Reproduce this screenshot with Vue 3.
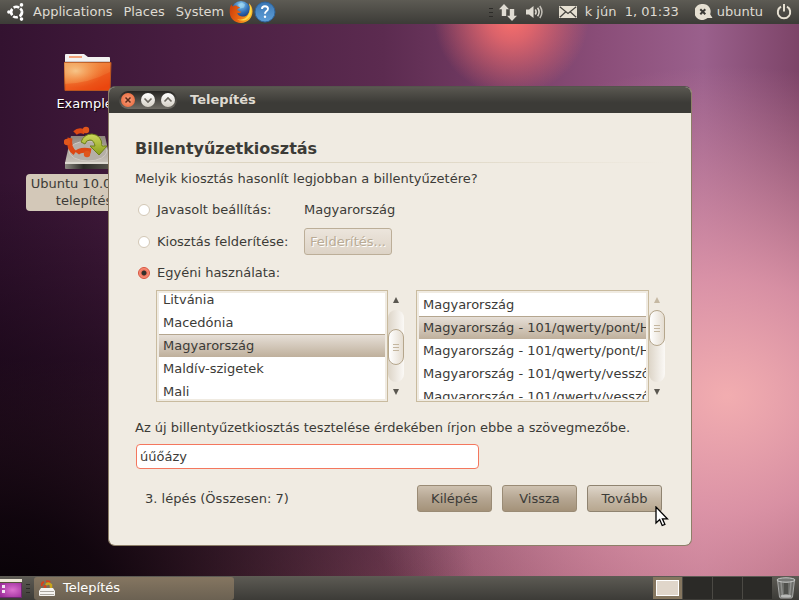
<template>
  <div class="desktop">
    <!-- Top panel -->
    <header class="panel panel-top">
      <nav class="menus">
        <svg class="logo" width="18" height="18" viewBox="0 0 18 18">
          <g fill="none" stroke="#fff" stroke-width="2.600">
            <path d="M6.600 4.600A5.200 5.200 0 0 1 12.200 4.800" />
            <path d="M15 8.200A5.200 5.200 0 0 1 12.600 13.300" />
            <path d="M10.800 14.100A5.200 5.200 0 0 1 6.200 13.200" />
            <path d="M5.200 12.200A5.200 5.200 0 0 1 5.200 5.900" />
            <path d="M13.200 5.500A5.200 5.200 0 0 1 15 8.200" />
          </g>
          <circle cx="1.9" cy="9" r="1.800" fill="#fff" />
          <circle cx="14.500" cy="1.900" r="1.800" fill="#fff" />
          <circle cx="14.500" cy="16.100" r="1.800" fill="#fff" />
        </svg>
        <button v-for="menu in menus" :key="menu" class="menu-btn">{{ menu }}</button>
      </nav>
      <button class="launcher" aria-label="Firefox">
        <svg width="24" height="24" viewBox="0 0 24 24">
          <defs>
            <radialGradient id="ffGlobe" cx=".5" cy=".2" r=".8">
              <stop offset="0" stop-color="#8fd0f2" />
              <stop offset=".5" stop-color="#2f6fb8" />
              <stop offset="1" stop-color="#14245e" />
            </radialGradient>
            <linearGradient id="ffTail" x1="0" y1="0" x2="1" y2=".3">
              <stop offset="0" stop-color="#c93a0a" />
              <stop offset=".6" stop-color="#ec6a12" />
              <stop offset="1" stop-color="#f9b428" />
            </linearGradient>
          </defs>
          <circle cx="12" cy="10.500" r="9.500" fill="url(#ffGlobe)" />
          <path d="M9 4.500l4-2 3 2-1 3-4 1z" fill="#a6dcf4" opacity=".6" />
          <path
            d="M2.400 4.200Q1 6 .7 10C0 18 5.500 23 12 23s11.500-5 11.500-11.500c0-4-1.500-6.500-3.500-8.300q1.600 3.500.7 6.800c-1 4.800-4 7-7.700 6.500-2.800-.3-4.500-2-4.800-3.800 1.600.7 3.200.3 4.500-1-2.500.2-3-1.200-4.700-1.600.5-1.600 2-1.800 3.200-2.700C9.500 6.800 8 6.500 7.500 5.500 5.500 5.300 4.500 6 4 6.500 3 6 2.500 5.200 2.400 4.200z"
            fill="url(#ffTail)"
          />
          <path
            d="M20 3.200c3 3.500 3.500 9 .8 13.200-2.800 4.300-8.300 5.300-12.800 2.900 5 1.200 9.300-.8 11.200-4.300 1.900-3.400 2.200-8 .8-11.800z"
            fill="#fddb4a"
          />
        </svg>
      </button>
      <button class="launcher" aria-label="Help">
        <svg width="22" height="22" viewBox="0 0 22 22">
          <defs>
            <linearGradient id="helpBlue" x1="0" y1="0" x2="0" y2="1">
              <stop offset="0" stop-color="#3a76b4" />
              <stop offset="1" stop-color="#5f9fd8" />
            </linearGradient>
          </defs>
          <circle cx="11" cy="11" r="10" fill="url(#helpBlue)" stroke="#2f649c" />
          <path d="M8 8q0-2.800 3-2.800t3 2.600q0 1.500-1.600 2.500-1.400.9-1.400 2.400" fill="none" stroke="#fff" stroke-width="1.900" />
          <circle cx="11" cy="15.800" r="1.200" fill="#fff" />
        </svg>
      </button>

      <div class="tray">
        <span class="grip"></span>
        <svg class="net" width="18" height="17" viewBox="0 0 18 17" fill="#dfdbd2">
          <path d="M5 0l5 5.200H7.200V12H2.800V5.200H0z" />
          <path d="M13 17l-5-5.200h2.800V5h4.400v6.800H18z" />
        </svg>
        <svg class="sound" width="17" height="14" viewBox="0 0 17 14">
          <path d="M0 4.500h3L7.500 1v12L3 9.500H0z" fill="#dfdbd2" />
          <g fill="none" stroke="#dfdbd2" stroke-width="1.500">
            <path d="M9.300 4.500q1.700 2.500 0 5" />
            <path d="M11.600 2.800q3 4.200 0 8.400" />
            <path d="M13.800 1q4.300 6 0 12" opacity=".8" />
          </g>
        </svg>
        <svg class="mail" width="18" height="12" viewBox="0 0 18 12">
          <rect width="18" height="12" fill="#e6e0d2" />
          <path d="M.8.8L9 7.500 17.200.8M.8 11.200L6.800 5.800M17.200 11.200L11.200 5.800" fill="none" stroke="#45433e" stroke-width="1.200" />
        </svg>
        <span class="clock">k jún&nbsp; 1, 01:33</span>
        <svg class="chat" width="18" height="16" viewBox="0 0 18 16">
          <path d="M8 0a7.600 7.600 0 0 1 7.200 10.200L17.500 14H12.500A8 8 0 1 1 8 0z" fill="#e6e0d2" />
          <path d="M5.300 5.300l5 5M10.300 5.300l-5 5" stroke="#3c3b37" stroke-width="2" />
        </svg>
        <span class="user">ubuntu</span>
        <svg class="power" width="16" height="16" viewBox="0 0 16 16" fill="none" stroke="#e6e0d2" stroke-width="2">
          <path d="M5 2.700a6.200 6.200 0 1 0 6 0" />
          <path d="M8 0v7.500" />
        </svg>
      </div>
    </header>

    <!-- Desktop area -->
    <main class="workspace">
      <div class="shortcut examples">
        <svg width="48" height="40" viewBox="0 0 48 40">
          <defs>
            <linearGradient id="folder" x1="0" y1="0" x2=".7" y2="1">
              <stop offset="0" stop-color="#f0a45e" />
              <stop offset=".5" stop-color="#f07a35" />
              <stop offset="1" stop-color="#ea4a12" />
            </linearGradient>
            <radialGradient id="folderGlow" cx=".25" cy=".3" r=".6">
              <stop offset="0" stop-color="#f8d49a" stop-opacity=".8" />
              <stop offset="1" stop-color="#f8a050" stop-opacity="0" />
            </radialGradient>
          </defs>
          <path d="M1 12V2q0-1 1-1h18l4 3h21q1 0 1 1v7z" fill="#f3f1f1" />
          <rect x="5" y="3" width="13" height="2" fill="#f3a27a" />
          <rect x="1" y="8" width="45" height="2" fill="#cfcaca" />
          <path d="M0 9.500h47L46 37.500H1z" fill="url(#folder)" stroke="#b8541f" />
          <path d="M0 9.500h47L46 37.500H1z" fill="url(#folderGlow)" />
          <path d="M1 31Q26 30 46 19v18H1z" fill="#ea3f08" opacity=".35" />
        </svg>
        <span class="caption">Examples</span>
      </div>
      <div class="shortcut installer">
        <svg width="48" height="46" viewBox="0 0 48 46">
          <defs>
            <linearGradient id="drive" x1="0" y1="0" x2="0" y2="1">
              <stop offset="0" stop-color="#8e857c" />
              <stop offset="1" stop-color="#c9c3bb" />
            </linearGradient>
            <linearGradient id="arrow" x1="0" y1="0" x2="0" y2="1">
              <stop offset="0" stop-color="#cdd85c" />
              <stop offset="1" stop-color="#8a9e1c" />
            </linearGradient>
            <linearGradient id="driveFront" x1="0" y1="0" x2="1" y2="0">
              <stop offset="0" stop-color="#8b8880" />
              <stop offset=".4" stop-color="#2c2b27" />
              <stop offset="1" stop-color="#57544c" />
            </linearGradient>
          </defs>
          <path d="M7 10h34l6 27H1z" fill="url(#drive)" />
          <ellipse cx="24" cy="25" rx="19" ry="10" fill="#b5afa7" stroke="#cfcac3" />
          <path d="M1 36h46v6q0 1-1 1H2q-1 0-1-1z" fill="url(#driveFront)" />
          <path d="M1 36h46v2H1z" fill="#dcd8d0" />
          <g fill="none" stroke="#dd4814" stroke-width="5">
            <path d="M11 7Q15 3 21 6" />
            <path d="M6 12Q4 22 11 27" />
            <path d="M13 27q3-4 14-2" />
          </g>
          <circle cx="22" cy="4" r="3.200" fill="#e0561c" />
          <circle cx="3" cy="16" r="3.200" fill="#e0561c" />
          <circle cx="23" cy="28" r="3.200" fill="#e0561c" />
          <path d="M17 16Q20 8 28 8q10 1 10 12h5l-8 9-9-9h5q-1-6-5-6-4 0-5 4z" fill="url(#arrow)" stroke="#6f8019" />
        </svg>
        <span class="caption selected">Ubuntu 10.04 LTS<br />telepítése</span>
      </div>

      <!-- Installer window -->
      <section class="window">
        <div class="titlebar">
          <div class="controls">
            <button class="ctl ctl-close" aria-label="Close">
              <svg width="14" height="14" viewBox="0 0 14 14"><path d="M4.500 4.500l5 5M9.500 4.500l-5 5" stroke="#5a2a18" stroke-width="1.500" /></svg>
            </button>
            <button class="ctl" aria-label="Minimize">
              <svg width="14" height="14" viewBox="0 0 14 14"><path d="M3.500 5.500L7 9l3.500-3.500" fill="none" stroke="#6a665e" stroke-width="1.600" /></svg>
            </button>
            <button class="ctl" aria-label="Maximize">
              <svg width="14" height="14" viewBox="0 0 14 14"><path d="M3.500 8.500L7 5l3.500 3.500" fill="none" stroke="#6a665e" stroke-width="1.600" /></svg>
            </button>
          </div>
          <span class="title">Telepítés</span>
        </div>

        <form class="content" @submit.prevent>
          <h1>Billentyűzetkiosztás</h1>
          <p class="question">Melyik kiosztás hasonlít legjobban a billentyűzetére?</p>

          <div class="choices">
            <label class="choice">
              <input v-model="mode" type="radio" name="mode" value="suggested" />
              Javasolt beállítás:
            </label>
            <span>Magyarország</span>
            <label class="choice">
              <input v-model="mode" type="radio" name="mode" value="detect" />
              Kiosztás felderítése:
            </label>
            <button type="button" class="detect" disabled>Felderítés...</button>
            <label class="choice">
              <input v-model="mode" type="radio" name="mode" value="custom" />
              Egyéni használata:
            </label>
          </div>

          <div class="lists">
            <div v-for="list in lists" :key="list.name" class="list">
              <div class="frame">
                <ul ref="viewports" class="rows" role="listbox" :aria-label="list.name">
                  <li
                    v-for="(item, i) in list.items"
                    :key="i"
                    role="option"
                    :aria-selected="i === list.selected"
                    :class="{ active: i === list.selected }"
                    @click="list.selected = i"
                  >
                    {{ item }}
                  </li>
                </ul>
              </div>
              <div class="scrollbar">
                <button type="button" class="step" :disabled="list.thumb === 0" aria-label="Up">
                  <svg width="6" height="6" viewBox="0 0 6 6"><path d="M3 0l3 6H0z" fill="currentColor" /></svg>
                </button>
                <div class="trough">
                  <div class="thumb" :style="{ marginTop: list.thumb + 'px' }"><i></i><i></i><i></i></div>
                </div>
                <button type="button" class="step" aria-label="Down">
                  <svg width="6" height="6" viewBox="0 0 6 6"><path d="M3 6L0 0h6z" fill="currentColor" /></svg>
                </button>
              </div>
            </div>
          </div>

          <label for="test">Az új billentyűzetkiosztás tesztelése érdekében írjon ebbe a szövegmezőbe.</label>
          <input id="test" v-model="testText" class="test-input" type="text" />

          <div class="footer">
            <span class="progress">3. lépés (Összesen: 7)</span>
            <button type="button" class="btn">Kilépés</button>
            <button type="button" class="btn">Vissza</button>
            <button type="submit" class="btn hover">Tovább</button>
          </div>
        </form>
      </section>

      <svg class="pointer" width="14" height="21" viewBox="0 0 14 21">
        <path d="M1 1v16l3.700-3.500L7.200 19.500l2.700-1.200-2.500-5.500h5z" fill="#fff" stroke="#000" stroke-width="1.300" />
      </svg>
    </main>

    <!-- Bottom panel -->
    <footer class="panel panel-bottom">
      <button class="show-desktop" aria-label="Show desktop">
        <svg width="22" height="19" viewBox="0 0 22 19">
          <defs>
            <radialGradient id="purple" cx=".6" cy=".5" r=".7">
              <stop offset="0" stop-color="#dc70cf" />
              <stop offset="1" stop-color="#9c2c9b" />
            </radialGradient>
          </defs>
          <rect width="22" height="19" fill="#6d2870" />
          <rect y="4" width="21" height="14" fill="url(#purple)" />
          <rect width="22" height="3" fill="#eee9d8" />
          <rect y="3" width="22" height="1" fill="#57523c" />
          <rect x="2" y="6" width="3" height="3" fill="#f3e4f2" />
          <rect x="2" y="11" width="3" height="3" fill="#f3e4f2" />
        </svg>
      </button>
      <span class="grip"></span>
      <button class="task">
        <svg width="16" height="16" viewBox="0 0 16 16">
          <path d="M2 8h12l2 3v4q0 1-1 1H1q-1 0-1-1v-4z" fill="#f4f3f1" />
          <path d="M1 11h14v1H1zM1 14h14v1H1z" fill="#aaa69f" />
          <path d="M3 6Q2 3 5 2M7 1.500q3-1 4 1" fill="none" stroke="#d8401c" stroke-width="2" />
          <path d="M7 5q2-3 5 0v3" fill="none" stroke="#c9a41c" stroke-width="2.500" />
          <circle cx="6" cy="6.500" r="1.500" fill="#d8401c" />
        </svg>
        Telepítés
      </button>
      <div class="switcher">
        <button v-for="n in 4" :key="n" class="space" :class="{ current: n === 1 }" :aria-label="'Workspace ' + n"></button>
      </div>
      <button class="trash" aria-label="Trash">
        <svg width="20" height="22" viewBox="0 0 20 22">
          <path d="M1.500 3h17L16.500 20q-.2 1-1.500 1H5q-1.300 0-1.500-1z" fill="#6c6d69" stroke="#a9aaa8" />
          <path d="M5 5l1.300 13M15 5l-1.300 13" stroke="#8f908d" stroke-width="1.500" />
          <path d="M8 6h4v11H8z" fill="#4f504c" />
          <ellipse cx="10" cy="3" rx="9" ry="2.200" fill="#777875" stroke="#c9cac8" />
          <ellipse cx="10" cy="19" rx="5.500" ry="1.600" fill="#b9bab8" />
        </svg>
      </button>
    </footer>
  </div>
</template>

<script setup>
import { onMounted, reactive, ref } from "vue";

const menus = ["Applications", "Places", "System"];

const mode = ref("custom");
const testText = ref("úűőázy");
const viewports = ref([]);

const lists = reactive([
  {
    name: "Ország",
    items: ["Litvánia", "Macedónia", "Magyarország", "Maldív-szigetek", "Mali"],
    selected: 2,
    scroll: 5,
    thumb: 19,
  },
  {
    name: "Kiosztás",
    items: [
      "Magyarország",
      "Magyarország - 101/qwerty/pont/Halott billentyűk",
      "Magyarország - 101/qwerty/pont/Halott billentyűk nélkül",
      "Magyarország - 101/qwerty/vessző/Halott billentyűk",
      "Magyarország - 101/qwerty/vessző/Halott billentyűk nélkül",
    ],
    selected: 1,
    scroll: 0,
    thumb: 0,
  },
]);

// Restore the scroll offset of each list
onMounted(() => {
  viewports.value.forEach((el, i) => {
    el.scrollTop = lists[i].scroll;
  });
});
</script>

<style>
body {
  margin: 0;
}
</style>

<style scoped>
.desktop {
  display: flex;
  flex-direction: column;
  min-height: 100vh;
  overflow: hidden;
  font-family: "DejaVu Sans", sans-serif;
  font-size: 13px;
  line-height: 18px;
  color: #3c3b37;
  background:
    radial-gradient(circle at 64% 3%, #fb706c 0, rgba(244, 108, 108, 0.8) 3%, rgba(200, 90, 110, 0) 10%),
    radial-gradient(ellipse 60% 75% at 0% 105%, #020002 0, rgba(8, 1, 8, 0.9) 25%, rgba(20, 4, 18, 0) 100%),
    radial-gradient(ellipse 50% 55% at 91% 66%, #f2adb0 0, rgba(229, 155, 172, 0.85) 35%, rgba(200, 120, 150, 0) 100%),
    linear-gradient(to bottom, rgba(190, 100, 110, 0) 60%, rgba(205, 120, 115, 0.35) 100%),
    linear-gradient(to right, #331230 0, #471d40 22%, #5c2b50 48%, #8a4d78 75%, #9a608c 88%, #7d4468 100%);
}

button,
input {
  font: inherit;
  color: inherit;
}

button {
  margin: 0;
  padding: 0;
  border: none;
  background: none;
}

svg {
  display: block;
  flex: none;
}

.panel {
  display: flex;
  align-items: center;
  height: 24px;
  background: linear-gradient(#5d5b54, #3c3b37);
  color: #dfdbd2;
}

.menus {
  display: flex;
  align-items: center;
  margin-right: 5px;
  gap: 11px;
}

.logo {
  margin-left: 7px;
  margin-right: -3px;
}

.launcher {
  margin-right: 1px;
}

.tray {
  display: flex;
  align-items: center;
  margin-left: auto;
  padding-right: 7px;
}

.grip {
  width: 4px;
  height: 9px;
  background: repeating-linear-gradient(#2c2b28 0 1px, transparent 1px 4px);
}

.net {
  margin-left: 6px;
}

.sound {
  margin-left: 9px;
}

.mail {
  margin-left: 16px;
}

.clock {
  margin-left: 8px;
}

.chat {
  margin-left: 16px;
}

.user {
  margin-left: 4px;
}

.power {
  margin-left: 13px;
}

.workspace {
  position: relative;
  flex: 1;
  min-height: 552px;
}

.shortcut {
  position: absolute;
  left: 18px;
  width: 140px;
  display: flex;
  flex-direction: column;
  align-items: center;
  gap: 2px;
}

.examples {
  top: 29px;
}

.installer {
  top: 102px;
}

.caption {
  color: #fff;
  text-align: center;
  text-shadow: 1px 1px 1px #000;
}

.caption.selected {
  padding: 1px 5px 2px;
  border-radius: 4px;
  line-height: 17px;
  color: #3c3b37;
  background: #d3c8b8;
  text-shadow: none;
}

.window {
  position: absolute;
  top: 62px;
  left: 108px;
  right: 107px;
  box-sizing: border-box;
  border: 1px solid #8d7f68;
  border-top-color: #55534d;
  border-radius: 7px;
  background: #f0ebe2;
  overflow: hidden;
}

.titlebar {
  display: flex;
  align-items: center;
  gap: 13px;
  height: 26px;
  padding-left: 10px;
  background: linear-gradient(#5a5851, #3c3b37 60%);
}

.controls {
  display: flex;
  gap: 6px;
  padding: 2px;
  border-radius: 9px;
  background: linear-gradient(#262522, #6f6c65);
}

.ctl {
  width: 14px;
  height: 14px;
  border-radius: 7px;
  background: linear-gradient(#fff, #d5d0c6);
}

.ctl-close {
  background: radial-gradient(#f8a080, #e9602f);
}

.title {
  font-weight: bold;
  color: #dfdbd2;
}

.content {
  display: flex;
  flex-direction: column;
  padding: 26px 26px 33px;
}

h1 {
  margin: 0;
  padding-bottom: 4px;
  font-size: 16px;
  line-height: 20px;
  background: linear-gradient(to right, #f0ebe2, #ddd5c2 20%, #ddd5c2 50%, #f0ebe2) bottom / 100% 1px no-repeat;
}

.question {
  margin: 7px 0 12px;
}

.choices {
  display: grid;
  grid-template-columns: 169px max-content;
  grid-template-rows: 20px 27px 20px;
  row-gap: 8px;
  align-items: center;
}

.choice {
  display: flex;
  align-items: center;
  gap: 7px;
  padding-left: 3px;
}

.choice input {
  appearance: none;
  box-sizing: border-box;
  width: 12px;
  height: 12px;
  margin: 0;
  border: 1px solid #d3c8b6;
  border-radius: 50%;
  background: #fff;
}

.choice input:checked {
  border-color: #d8503a;
  background: radial-gradient(circle, #33302c 0 2px, #f2745c 3px, #f9a592 6px);
}

.detect {
  width: 88px;
  height: 27px;
  border: 1px solid #bcae98;
  border-radius: 3px;
  color: #b9ab95;
  text-shadow: 1px 1px 0 #fff;
  background: linear-gradient(#ece5dc, #ddd3c6);
}

.lists {
  display: grid;
  grid-template-columns: 248fr 249fr;
  gap: 12px;
  margin: 7px 0 17px 21px;
}

.list {
  display: flex;
  min-width: 0;
}

.frame {
  flex: 1;
  min-width: 0;
  padding: 2px;
  border: 1px solid #c9bb9f;
}

.rows {
  height: 106px;
  margin: 0;
  padding: 0;
  overflow: hidden;
  list-style: none;
  background: #fff;
}

.rows li {
  box-sizing: border-box;
  height: 23px;
  padding: 1px 0 0 4px;
  line-height: 20px;
  white-space: nowrap;
  border-top: 1px solid transparent;
  overflow: hidden;
}

.rows li.active {
  border-top-color: #b5a68f;
  background: linear-gradient(#e6dfd7, #bfb09c) padding-box;
}

.scrollbar {
  display: flex;
  flex-direction: column;
  width: 16px;
}

.step {
  display: flex;
  align-items: center;
  justify-content: center;
  height: 20px;
  color: #5a5750;
}

.step:disabled {
  color: #c5b8a2;
}

.trough {
  display: flow-root;
  flex: 1;
  border-radius: 8px;
  background: linear-gradient(to right, #ddd5c8, #fbf9f6);
}

.thumb {
  display: flex;
  flex-direction: column;
  align-items: center;
  justify-content: center;
  gap: 2px;
  box-sizing: border-box;
  height: 36px;
  border: 1px solid #b5a68c;
  border-radius: 8px;
  background: linear-gradient(to right, #fff, #e5ddd1);
}

.thumb i {
  width: 6px;
  height: 1px;
  background: #c4b69f;
}

.test-input {
  box-sizing: border-box;
  width: 100%;
  max-width: 343px;
  height: 25px;
  margin: 7px 0 16px 1px;
  padding: 0 3px;
  border: 1px solid #f4775e;
  border-radius: 4px;
  background: #fff;
  outline: none;
}

.footer {
  display: flex;
  align-items: center;
  gap: 10px;
  padding: 0 3px 0 10px;
}

.progress {
  flex: 1;
}

.btn {
  box-sizing: border-box;
  width: 75px;
  height: 27px;
  border: 1px solid #9a8b75;
  border-radius: 3px;
  background: linear-gradient(#cec1b0, #b5a692 50%, #a49279);
}

.btn.hover {
  border-color: #8f8370;
  background: linear-gradient(#ded5c9, #c7baa8 50%, #b7a78f);
}

.pointer {
  position: absolute;
  top: 482px;
  left: 655px;
}

.show-desktop {
  margin-right: 4px;
}

.task {
  display: flex;
  align-items: center;
  gap: 8px;
  width: 25%;
  height: 23px;
  margin-left: 4px;
  padding-left: 5px;
  border-radius: 3px;
  color: #fff;
  background: linear-gradient(#857661, #6b6152);
}

.switcher {
  display: flex;
  gap: 1px;
  margin-left: auto;
  margin-right: 4px;
  background: #4b4944;
}

.space {
  width: 29px;
  height: 22px;
  background: #2b2a27;
}

.space.current {
  border: 4px solid #85765f;
  outline: 1px solid #fff;
  outline-offset: -4px;
  background: #e0d6ca;
}

.trash {
  margin-right: 3px;
}
</style>
